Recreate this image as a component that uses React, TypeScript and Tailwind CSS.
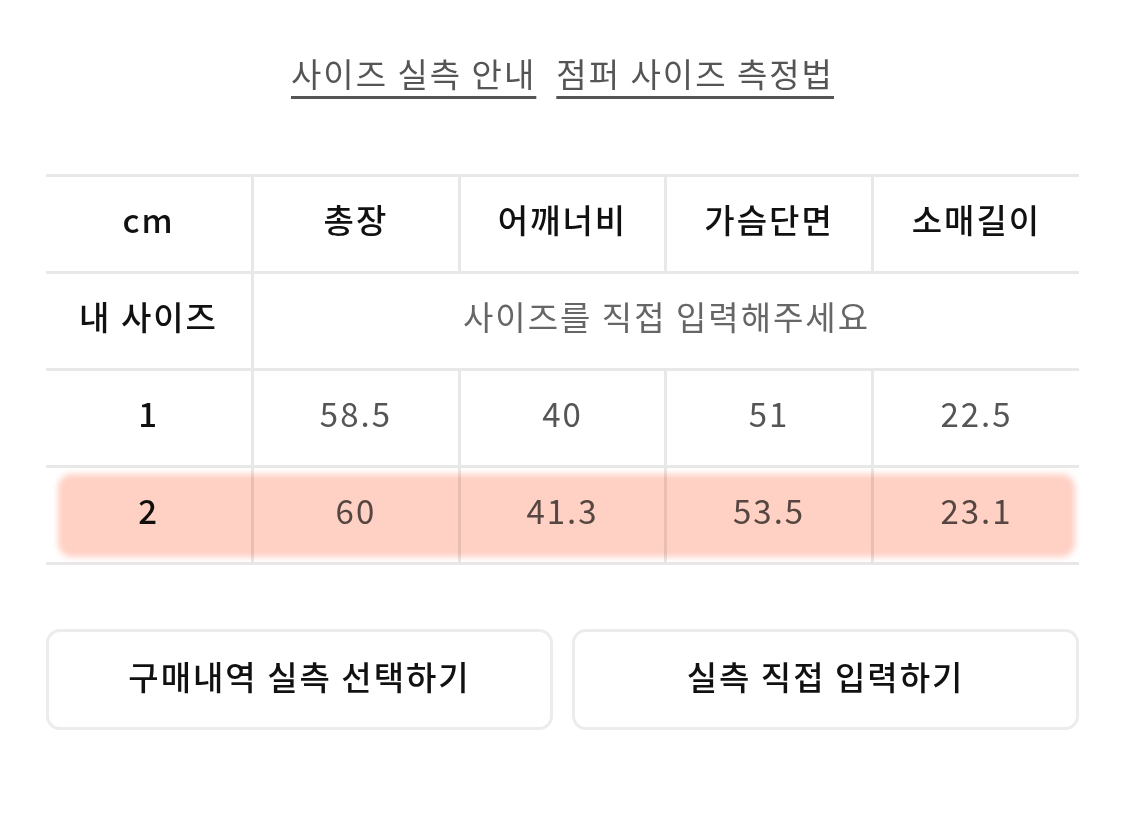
import React from 'react'

const cols = ['총장', '어깨너비', '가슴단면', '소매길이']
const rows = [
  { size: '1', values: ['58.5', '40', '51', '22.5'], highlight: false },
  { size: '2', values: ['60', '41.3', '53.5', '23.1'], highlight: true },
]

const cell = 'h-[97px] pb-[8px] border-[#e8e8e8] text-center align-middle'

export default function App() {
  return (
    <div
      className="w-[1125px] h-[824px] bg-white px-[46px] pt-[48px] text-[33px] tracking-[2px]"
      style={{ fontFamily: '"Noto Sans CJK KR", "Noto Sans", sans-serif' }}
    >
      {/* Guide links */}
      <div className="flex justify-center gap-[20px] text-[#555] h-[58px] leading-[50px]">
        <a className="underline decoration-[3px] underline-offset-[9px]">사이즈 실측 안내</a>
        <a className="underline decoration-[3px] underline-offset-[9px]">점퍼 사이즈 측정법</a>
      </div>

      {/* Size table */}
      <div className="relative mt-[68px]">
        <table className="w-full table-fixed border-collapse">
          <tbody>
            <tr className="border-t-[3px] border-[#e8e8e8]">
              <td className={`${cell} text-[#111] font-medium`}>cm</td>
              {cols.map((c) => (
                <td key={c} className={`${cell} border-l-[3px] text-[#111] font-medium`}>
                  {c}
                </td>
              ))}
            </tr>
            <tr className="border-t-[3px] border-[#e8e8e8]">
              <td className={`${cell} text-[#111] font-medium`}>내 사이즈</td>
              <td colSpan={4} className={`${cell} border-l-[3px] text-[#666]`}>
                사이즈를 직접 입력해주세요
              </td>
            </tr>
            {rows.map((r) => (
              <tr key={r.size} className="border-t-[3px] border-b-[3px] border-[#e8e8e8]">
                <td className={`${cell} text-[#111] font-medium`}>{r.size}</td>
                {r.values.map((v, i) => (
                  <td key={i} className={`${cell} border-l-[3px] text-[#555]`}>
                    {v}
                  </td>
                ))}
              </tr>
            ))}
          </tbody>
        </table>
        {/* highlighter stroke over size 2 */}
        <div className="pointer-events-none absolute left-[12px] right-[4px] top-[300px] h-[83px] rounded-[14px] bg-[#ffd0c4] mix-blend-multiply blur-[3px]" />
      </div>

      {/* Actions */}
      <div className="mt-[64px] grid grid-cols-2 gap-[19px]">
        <button className="h-[101px] pb-[6px] rounded-[14px] border-[3px] border-[#ececec] bg-white text-[#111] font-medium">
          구매내역 실측 선택하기
        </button>
        <button className="h-[101px] pb-[6px] rounded-[14px] border-[3px] border-[#ececec] bg-white text-[#111] font-medium">
          실측 직접 입력하기
        </button>
      </div>
    </div>
  )
}
